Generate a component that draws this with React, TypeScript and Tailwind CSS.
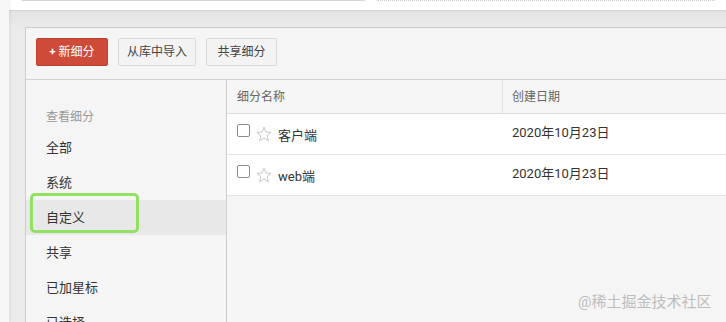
import React from "react";

const Star = () => (
  <svg width="16" height="16" viewBox="0 0 16 16" className="shrink-0">
    <polygon
      points="8,1.2 9.95,6.05 15.1,6.35 11.1,9.65 12.4,14.7 8,11.9 3.6,14.7 4.9,9.65 0.9,6.35 6.05,6.05"
      fill="none"
      stroke="#c6c6c6"
      strokeWidth="1"
      strokeLinejoin="round"
    />
  </svg>
);

const Row = ({ name }: { name: string }) => (
  <div className="flex h-[41px] bg-white border-b border-[#e4e4e4]">
    <div className="w-[276px] shrink-0 flex items-start pl-[10px]">
      <div className="mt-[10px] w-[13px] h-[13px] border border-[#8c8c8c] rounded-[2px] bg-white shrink-0" />
      <div className="ml-[6px] mt-[12px]">
        <Star />
      </div>
      <span className="ml-[6px] mt-[12px] text-[13px] leading-[20px] text-[#333]">{name}</span>
    </div>
    <div className="pl-[9px] pt-[9px] text-[13px] leading-[20px] text-[#333]">2020年10月23日</div>
  </div>
);

export default function App() {
  const items = ["全部", "系统", "自定义", "共享", "已加星标", "已选择"];
  return (
    <div className="relative w-[726px] h-[322px] overflow-hidden flex bg-[#ebebeb] font-['Roboto','Noto_Sans_CJK_SC',sans-serif]">
      <div className="w-[9px] shrink-0 bg-[#f7f7f7] shadow-[1px_0_3px_rgba(0,0,0,0.07)] z-10" />
      <div className="flex-1 flex flex-col min-w-0">
        <div className="h-[11px] shrink-0 bg-white border-b border-[#d4d4d4] flex items-start">
          <div className="ml-[13px] w-[343px] h-px bg-[#d6d6d6]" />
          <div className="ml-[12px] w-[338px] border-t border-dotted border-[#cdcdcd]" />
        </div>
        <div className="h-[16px] shrink-0 bg-gradient-to-b from-[#e2e2e2] to-[#ebebeb]" />
        <div className="ml-[16px] flex-1 flex flex-col min-h-0 bg-[#f5f5f5] border-t border-l border-[#cdcdcd]">
          <div className="h-[52px] shrink-0 border-b border-[#d2d2d2] flex items-start pt-[10px] pl-[10px] gap-[10px]">
            <button className="w-[72px] h-[28px] rounded-[2px] bg-[#cf4b39] border border-[#bd3f2e] text-white text-[12px] leading-[26px] flex items-center justify-center">
              <span className="font-bold text-[11px] mr-[3px]">+</span>新细分
            </button>
            <button className="w-[78px] h-[28px] rounded-[2px] bg-[#f3f3f3] border border-[#dadada] text-[#444] text-[12px] leading-[26px]">
              从库中导入
            </button>
            <button className="w-[71px] h-[28px] rounded-[2px] bg-[#f3f3f3] border border-[#dadada] text-[#444] text-[12px] leading-[26px]">
              共享细分
            </button>
          </div>
          <div className="flex flex-1 min-h-0">
            <div className="relative w-[201px] shrink-0 border-r border-[#cdcdcd] pt-[28px]">
              <div className="h-[18px] leading-[18px] pl-[20px] text-[12px] text-[#999] mb-[4px]">查看细分</div>
              {items.map((t) => (
                <div
                  key={t}
                  className={
                    "h-[35px] pl-[20px] flex items-center text-[13px] text-[#333] " +
                    (t === "自定义" ? "bg-[#e8e8e8]" : "")
                  }
                >
                  {t}
                </div>
              ))}
              <div className="absolute left-[4px] top-[113px] w-[109px] h-[40px] border-[3px] border-[#93e162] rounded-[5px]" />
            </div>
            <div className="flex-1 flex flex-col min-w-0">
              <div className="h-[34px] shrink-0 flex bg-[#f6f6f6] border-b border-[#dedede]">
                <div className="w-[276px] shrink-0 border-r border-[#e2e2e2] pl-[10px] flex items-center text-[12px] text-[#666]">
                  细分名称
                </div>
                <div className="pl-[9px] flex items-center text-[12px] text-[#666]">创建日期</div>
              </div>
              <Row name="客户端" />
              <Row name="web端" />
            </div>
          </div>
        </div>
      </div>
      <div className="absolute left-[578px] top-[292px] text-[15px] leading-[20px] text-[#bdbdbd] whitespace-nowrap">
        @稀土掘金技术社区
      </div>
    </div>
  );
}
